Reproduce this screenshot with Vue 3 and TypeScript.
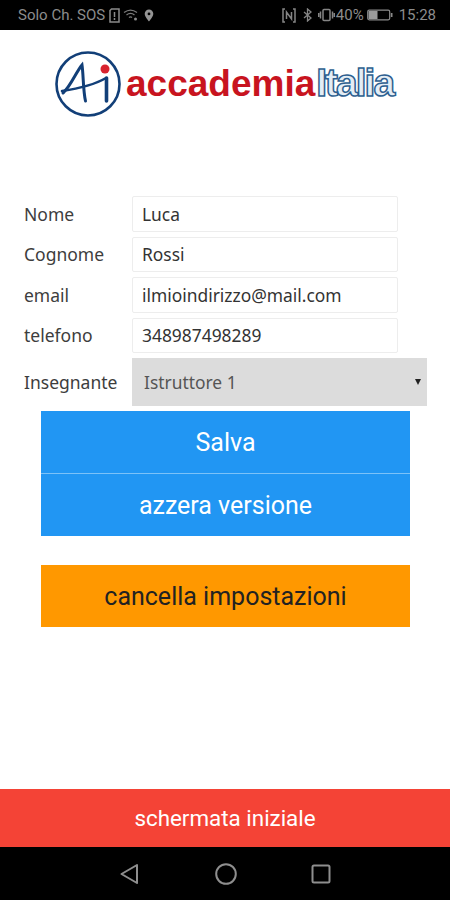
<script setup lang="ts">
interface Field {
  label: string
  value: string
}

const fields: Field[] = [
  { label: 'Nome', value: 'Luca' },
  { label: 'Cognome', value: 'Rossi' },
  { label: 'email', value: 'ilmioindirizzo@mail.com' },
  { label: 'telefono', value: '348987498289' },
]
</script>

<template>
  <div class="screen">
    <header class="status">
      <div class="status__side">
        <span class="status__carrier">Solo Ch. SOS</span>
        <svg class="status__sim" width="11" height="15" viewBox="0 0 11 15" fill="none" stroke="#8a8a8a" stroke-width="1.5">
          <path d="M1 2.500 2.500 1h7.500v13H1Z" />
          <path d="M5.500 4v5M5.500 10v2" />
        </svg>
        <svg class="status__wifi" width="16" height="12" viewBox="0 0 16 12" fill="none" stroke="#7a7a7a" stroke-width="1.3">
          <path d="M1 3.500c4-3 9-3 13 0M3.500 6c2.500-2 5.500-2 8 0M6 8.500c1-.8 2-.8 3 0" />
          <circle cx="12.500" cy="10" r="1.500" fill="#8a8a8a" stroke="none" />
        </svg>
        <svg class="status__pin" width="10" height="13" viewBox="0 0 10 13">
          <path fill-rule="evenodd" fill="#949494" d="M5 .5a4.300 4.300 0 0 1 4.300 4.300C9.300 7.800 5 12.500 5 12.500S.7 7.800.7 4.800A4.300 4.300 0 0 1 5 .5Zm0 3a1.400 1.400 0 1 0 0 2.800 1.400 1.400 0 0 0 0-2.800Z" />
        </svg>
      </div>
      <div class="status__side">
        <svg width="14" height="15" viewBox="0 0 14 15" fill="none" stroke="#858585" stroke-width="1.5">
          <path d="M3 1H1v13h2M11 1h2v13h-2M4.500 11V4l5 7V4" />
        </svg>
        <svg class="status__bt" width="9" height="14" viewBox="0 0 9 14" fill="none" stroke="#858585" stroke-width="1.300">
          <path d="M1 4l7 6-3.500 3V1L8 4l-7 6" />
        </svg>
        <svg class="status__vibrate" width="17" height="14" viewBox="0 0 17 14" fill="none" stroke="#858585" stroke-width="1.500">
          <rect x="5" y="1.500" width="7" height="11" rx="1" />
          <path d="M2.500 3.500v7M14.500 3.500v7M.7 5v4M16.300 5v4" />
        </svg>
        <span class="status__pct">40%</span>
        <svg class="status__battery" width="26" height="12" viewBox="0 0 26 12">
          <rect x=".7" y="1.200" width="22" height="9.600" rx="1.500" fill="none" stroke="#8a8a8a" stroke-width="1.200" />
          <rect x="1.500" y="2" width="9" height="8" fill="#9a9a9a" />
          <rect x="23.800" y="4" width="1.700" height="4" fill="#8a8a8a" />
        </svg>
        <span class="status__time">15:28</span>
      </div>
    </header>

    <main class="content">
      <div class="logo">
        <svg class="logo__mark" width="68" height="68" viewBox="0 0 68 68" fill="none">
          <circle cx="34" cy="34" r="31.500" stroke="#123f78" stroke-width="2.600" />
          <path d="M9 43C17 36 22 22 28 15c1.500 10 1 25 3.500 36" stroke="#123f78" stroke-width="3" stroke-linecap="round" />
          <path d="M8 41c14-2 32-6 44-13" stroke="#123f78" stroke-width="2.600" stroke-linecap="round" />
          <path d="M52.500 28v23" stroke="#123f78" stroke-width="3.600" stroke-linecap="round" />
          <circle cx="51" cy="19" r="4.500" fill="#d8232f" />
        </svg>
        <div class="logo__word">
          <span class="logo__red">accademia</span><span class="logo__outline">Italia</span>
        </div>
      </div>

      <form class="form" @submit.prevent>
        <div v-for="field in fields" :key="field.label" class="form__row">
          <label class="form__label">{{ field.label }}</label>
          <input class="form__input" type="text" :value="field.value" />
        </div>
        <div class="form__row form__row--select">
          <label class="form__label">Insegnante</label>
          <div class="form__select">
            <span>Istruttore 1</span>
            <span class="form__caret"></span>
          </div>
        </div>
      </form>

      <div class="actions">
        <button class="btn btn--blue" type="button">Salva</button>
        <button class="btn btn--blue" type="button">azzera versione</button>
        <button class="btn btn--orange" type="button">cancella impostazioni</button>
      </div>
    </main>

    <button class="home" type="button">schermata iniziale</button>

    <nav class="nav">
      <svg width="22" height="22" viewBox="0 0 22 22" fill="none" stroke="#8e8e8e" stroke-width="2" stroke-linejoin="round">
        <path d="M18 2 2.500 11 18 20Z" />
      </svg>
      <svg width="22" height="22" viewBox="0 0 22 22" fill="none" stroke="#8e8e8e" stroke-width="2">
        <circle cx="11" cy="11" r="9.800" />
      </svg>
      <svg width="20" height="20" viewBox="0 0 20 20" fill="none" stroke="#8e8e8e" stroke-width="2" stroke-linejoin="round">
        <rect x="1.500" y="1.500" width="17" height="17" rx="1.500" />
      </svg>
    </nav>
  </div>
</template>

<style scoped>
.screen {
  display: flex;
  flex-direction: column;
  width: 450px;
  height: 900px;
  overflow: hidden;
  background: #fff;
  font-family: Roboto, "Noto Sans", sans-serif;
  color: #333;
}

.status {
  display: flex;
  justify-content: space-between;
  align-items: center;
  height: 30px;
  padding: 0 14px 0 18px;
  box-sizing: border-box;
  background: #000;
  color: #8c8c8c;
  font-size: 15px;
}

.status__side {
  display: flex;
  align-items: center;
  gap: 7px;
}

.status__carrier {
  margin-right: -3px;
}

.status__wifi {
  margin-left: -4px;
}

.status__pin {
  margin-left: -2px;
}

.status__vibrate {
  margin-left: -1px;
}

.status__pct {
  margin-left: -6px;
}

.status__battery {
  margin-left: -4px;
}

.status__time {
  margin-left: -1px;
}

.content {
  flex: 1;
  min-height: 0;
}

.logo {
  display: flex;
  align-items: center;
  padding: 20px 0 0 54px;
  height: 68px;
}

.logo__word {
  margin: 0 0 4px 4px;
  font-family: "Liberation Sans", Arial, sans-serif;
  font-weight: 700;
  font-size: 37px;
  line-height: 1;
  white-space: nowrap;
}

.logo__red {
  color: #c8141f;
}

.logo__outline {
  margin-left: 1px;
  font-size: 39px;
  letter-spacing: -2px;
  color: #e4edf5;
  -webkit-text-stroke: 1.500px #2d5f90;
}

.form {
  display: flex;
  flex-direction: column;
  gap: 5px;
  margin-top: 78px;
  font-family: "Noto Sans", Roboto, sans-serif;
}

.form__row {
  display: flex;
  align-items: center;
  height: 35.500px;
  padding-left: 24px;
}

.form__row--select {
  height: 48px;
}

.form__label {
  width: 108px;
  flex: none;
  font-size: 17.500px;
  color: #3d3d3d;
}

.form__input {
  width: 266px;
  height: 100%;
  box-sizing: border-box;
  padding: 0 9px;
  border: 1px solid #ededed;
  border-radius: 2px;
  outline: none;
  background: #fff;
  font: 17.400px "Noto Sans", Roboto, sans-serif;
  color: #333;
}

.form__select {
  display: flex;
  justify-content: space-between;
  align-items: center;
  width: 295px;
  height: 100%;
  box-sizing: border-box;
  padding: 0 6px 0 12px;
  background: #dcdcdc;
  font-size: 17.400px;
  color: #555;
}

.form__caret {
  width: 0;
  height: 0;
  border-left: 3.500px solid transparent;
  border-right: 3.500px solid transparent;
  border-top: 6px solid #222;
}

.actions {
  display: flex;
  flex-direction: column;
  margin: 5px 40px 0 41px;
}

.btn {
  display: block;
  width: 100%;
  height: 62px;
  border: none;
  padding: 0;
  font: 25px Roboto, "Noto Sans", sans-serif;
}

.btn--blue {
  background: #2196f3;
  color: #fff;
}

.btn--blue + .btn--blue {
  height: 63px;
  border-top: 1px solid #7cc2f8;
}

.btn--orange {
  margin-top: 29px;
  background: #ff9800;
  color: #222;
}

.home {
  display: block;
  flex: none;
  height: 58px;
  border: none;
  padding: 0;
  background: #f44336;
  color: #fff;
  font: 22.400px Roboto, "Noto Sans", sans-serif;
}

.nav {
  display: flex;
  justify-content: center;
  align-items: center;
  gap: 74px;
  flex: none;
  height: 53px;
  background: #000;
}
</style>
